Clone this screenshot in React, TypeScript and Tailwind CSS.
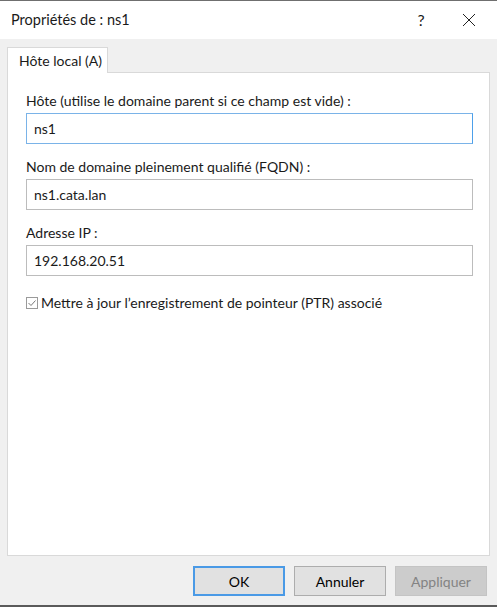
function Field({ label, value, focused = false }: { label: string; value: string; focused?: boolean }) {
  return (
    <div className="flex flex-col">
      <div className="h-[20px] leading-[20px]">{label}</div>
      <div
        className={`mt-[2px] flex h-[31px] items-center px-[7px] ${
          focused ? "border border-[#7ab3e8] border-r-[#4da0ea]" : "border border-[#bcbcbc]"
        } bg-white`}
      >
        {value}
      </div>
    </div>
  );
}

function Btn({ label, primary = false, disabled = false }: { label: string; primary?: boolean; disabled?: boolean }) {
  let cls = "border border-[#adadad] bg-[#e1e1e1] text-black";
  if (primary) cls = "border-2 border-[#4a9ae6] bg-[#e1e1e1] text-black";
  if (disabled) cls = "border border-[#c4c4c4] bg-[#cccccc] text-[#838383]";
  return (
    <div className={`flex h-[30px] w-[92px] items-center justify-center ${cls}`}>{label}</div>
  );
}

export default function App() {
  return (
    <div
      className="flex h-[607px] w-[497px] flex-col border-t border-b-2 border-t-[#6f6f6f] border-b-[#5a5a5a] bg-[#f0f0f0] text-[14px] text-[#1a1a1a]"
      style={{ fontFamily: '"Segoe UI", Lato, sans-serif' }}
    >
      {/* title bar */}
      <div className="flex h-[38px] shrink-0 items-center bg-white pl-[11px] text-[14.5px]">
        <span className="flex-1">Propriétés de : ns1</span>
        <span className="w-[40px] text-center text-[16px]">?</span>
        <span className="flex w-[56px] items-center justify-center">
          <svg width="14" height="14" viewBox="0 0 14 14">
            <path d="M1 1 L13 13 M13 1 L1 13" stroke="#222" strokeWidth="1" />
          </svg>
        </span>
      </div>

      {/* tabs + panel */}
      <div className="flex flex-1 flex-col px-[7px] pt-[8px]">
        <div className="flex">
          <div className="relative z-10 -mb-px flex h-[26px] w-[101px] items-center whitespace-nowrap border border-b-0 border-[#d9d9d9] bg-white pl-[11px]">
            Hôte local (A)
          </div>
        </div>
        <div className="flex h-[484px] flex-col gap-[13px] border border-[#d9d9d9] bg-white pl-[18px] pr-[16px] pt-[18px]">
          <Field label="Hôte (utilise le domaine parent si ce champ est vide) :" value="ns1" focused />
          <Field label="Nom de domaine pleinement qualifié (FQDN) :" value="ns1.cata.lan" />
          <Field label="Adresse IP :" value="192.168.20.51" />
          <div className="mt-[3px] flex items-center gap-[3px]">
            <svg width="12" height="12" viewBox="0 0 12 12">
              <rect x="0.5" y="0.5" width="11" height="11" fill="white" stroke="#9a9a9a" />
              <path d="M2.5 6 L5 8.5 L9.5 3.5" fill="none" stroke="#7a7a7a" strokeWidth="1" />
            </svg>
            <span>Mettre à jour l’enregistrement de pointeur (PTR) associé</span>
          </div>
        </div>
        <div className="mt-[10px] flex justify-end gap-[9px] pr-[3px]">
          <Btn label="OK" primary />
          <Btn label="Annuler" />
          <Btn label="Appliquer" disabled />
        </div>
      </div>
    </div>
  );
}
